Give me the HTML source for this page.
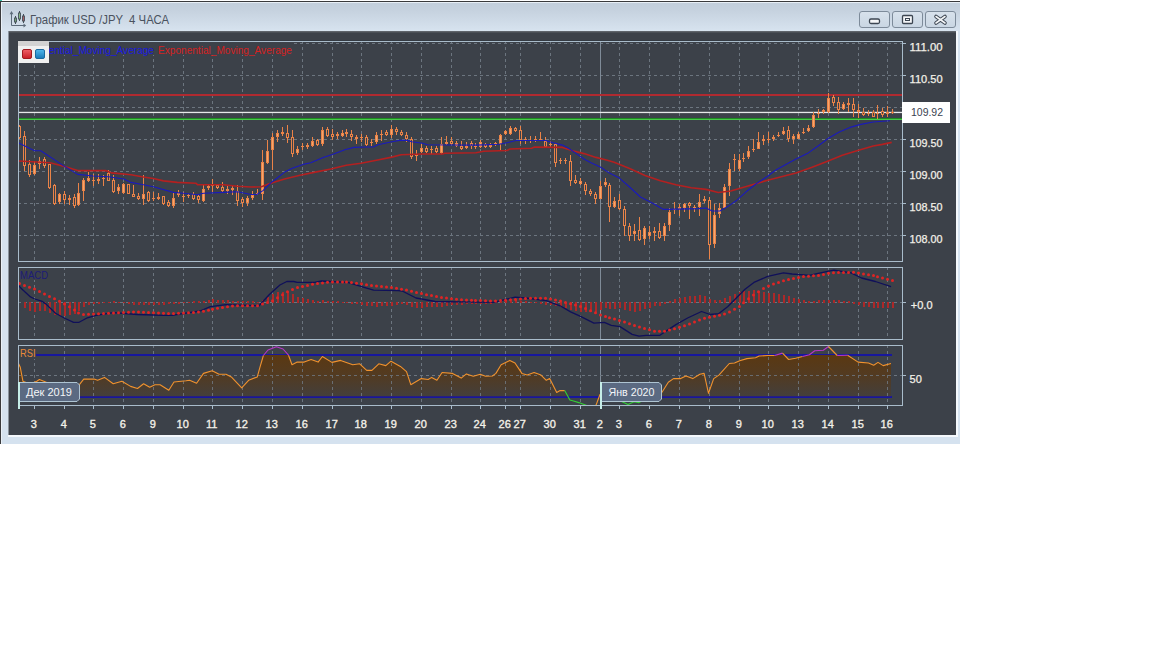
<!DOCTYPE html><html><head><meta charset="utf-8"><title>USD/JPY</title><style>html,body{margin:0;padding:0;background:#fff;width:1152px;height:648px;overflow:hidden}svg{display:block}text{font-family:"Liberation Sans",sans-serif}</style></head><body>
<svg width="1152" height="648" viewBox="0 0 1152 648">
<defs>
<linearGradient id="tb" x1="0" y1="0" x2="0" y2="1"><stop offset="0" stop-color="#c2cedb"/><stop offset="0.3" stop-color="#c6d2df"/><stop offset="1" stop-color="#d7e3ef"/></linearGradient>
<linearGradient id="lr" x1="0" y1="0" x2="0" y2="1"><stop offset="0" stop-color="#f06068"/><stop offset="1" stop-color="#c81c24"/></linearGradient><linearGradient id="lb" x1="0" y1="0" x2="0" y2="1"><stop offset="0" stop-color="#50b8ec"/><stop offset="1" stop-color="#1878b8"/></linearGradient>
<linearGradient id="btn" x1="0" y1="0" x2="0" y2="1"><stop offset="0" stop-color="#d8e2ec"/><stop offset="1" stop-color="#c9d6e3"/></linearGradient>
<linearGradient id="rf" gradientUnits="userSpaceOnUse" x1="0" y1="355" x2="0" y2="397"><stop offset="0" stop-color="#5c3810" stop-opacity="0.97"/><stop offset="0.5" stop-color="#5c3810" stop-opacity="0.68"/><stop offset="1" stop-color="#5c3810" stop-opacity="0.22"/></linearGradient>
<clipPath id="cmain"><rect x="19" y="42" width="883" height="219"/></clipPath>
<clipPath id="cmacd"><rect x="19" y="268" width="883" height="71"/></clipPath>
<clipPath id="crsi"><rect x="19" y="346" width="883" height="59"/></clipPath>
<clipPath id="rmid"><rect x="0" y="355" width="960" height="42"/></clipPath>
<clipPath id="rhi"><rect x="0" y="340" width="960" height="15"/></clipPath>
<clipPath id="rlo"><rect x="0" y="397" width="960" height="9"/></clipPath>
</defs>
<rect width="1152" height="648" fill="#fff"/>
<rect x="0" y="1" width="960" height="443" fill="#d5e2ef"/>
<rect x="1" y="2" width="959" height="29" fill="url(#tb)"/>
<rect x="1" y="2" width="959" height="1" fill="#e8eff6"/>
<rect x="1" y="2" width="1" height="442" fill="#eaf1f8"/>
<rect x="0" y="1" width="960" height="1" fill="#3a3a3c"/>
<rect x="0" y="0" width="1" height="444" fill="#3a3a3c"/>
<rect x="0" y="0" width="2" height="1" fill="#3cc0b0"/>
<rect x="9" y="31" width="947" height="404" fill="#3c4149"/>
<rect x="9" y="31" width="947" height="1" fill="#5f646b"/>
<rect x="9" y="32" width="947" height="1" fill="#4a4f56"/>
<rect x="8" y="31" width="1" height="405" fill="#8a949e"/>
<rect x="956" y="31" width="2" height="406" fill="#f4f8fc"/>
<rect x="8" y="435" width="950" height="2" fill="#f4f8fc"/>
<g fill="none" stroke="#5d6b7a" stroke-width="1">
<path d="M11.5 13 V25.5 H24"/>
</g>
<path d="M9.6 14.2 L11.5 11 L13.4 14.2 Z" fill="#5d6b7a"/><path d="M23.5 23.6 L26.2 25.5 L23.5 27.4 Z" fill="#5d6b7a"/>
<g stroke="#45505a" stroke-width="1">
<path d="M15.5 16 V24"/><path d="M19.5 11 V21"/><path d="M23.5 14 V23"/>
</g>
<rect x="14.5" y="18" width="2" height="4" fill="#78a878" stroke="#45505a" stroke-width="0.9"/>
<rect x="18.5" y="13" width="2" height="6" fill="#88b888" stroke="#45505a" stroke-width="0.9"/>
<rect x="22.5" y="16" width="2" height="5" fill="#a86068" stroke="#45505a" stroke-width="0.9"/>
<text x="30" y="24" font-size="12" fill="#4a525e" textLength="139" lengthAdjust="spacingAndGlyphs" xml:space="preserve">График USD /JPY  4 ЧАСА</text>
<rect x="859.5" y="11.5" width="30" height="16" rx="2.5" fill="url(#btn)" stroke="#7d8b9a"/>
<rect x="892.5" y="11.5" width="30" height="16" rx="2.5" fill="url(#btn)" stroke="#7d8b9a"/>
<rect x="925.5" y="11.5" width="30" height="16" rx="2.5" fill="url(#btn)" stroke="#7d8b9a"/>
<rect x="869.5" y="19" width="10" height="4.5" rx="1.5" fill="#f4f6f8" stroke="#3c4652" stroke-width="1.3"/>
<rect x="902.5" y="15.5" width="10" height="8" rx="1" fill="#f4f6f8" stroke="#3c4652" stroke-width="1.3"/>
<rect x="905.5" y="18.5" width="4" height="2" fill="none" stroke="#3c4652" stroke-width="1"/>
<path d="M936 16.5 L945 23 M945 16.5 L936 23" stroke="#3c4652" stroke-width="3.6" stroke-linecap="round"/>
<path d="M936 16.5 L945 23 M945 16.5 L936 23" stroke="#f4f6f8" stroke-width="1.6" stroke-linecap="round"/>
<g stroke="#6c757f" stroke-width="1" stroke-dasharray="3 3" shape-rendering="crispEdges">
<path d="M34.5 41 V261"/>
<path d="M34.5 267 V339"/>
<path d="M34.5 345 V405"/>
<path d="M64.5 41 V261"/>
<path d="M64.5 267 V339"/>
<path d="M64.5 345 V405"/>
<path d="M93.5 41 V261"/>
<path d="M93.5 267 V339"/>
<path d="M93.5 345 V405"/>
<path d="M123.5 41 V261"/>
<path d="M123.5 267 V339"/>
<path d="M123.5 345 V405"/>
<path d="M153.5 41 V261"/>
<path d="M153.5 267 V339"/>
<path d="M153.5 345 V405"/>
<path d="M183.5 41 V261"/>
<path d="M183.5 267 V339"/>
<path d="M183.5 345 V405"/>
<path d="M212.5 41 V261"/>
<path d="M212.5 267 V339"/>
<path d="M212.5 345 V405"/>
<path d="M242.5 41 V261"/>
<path d="M242.5 267 V339"/>
<path d="M242.5 345 V405"/>
<path d="M272.5 41 V261"/>
<path d="M272.5 267 V339"/>
<path d="M272.5 345 V405"/>
<path d="M302.5 41 V261"/>
<path d="M302.5 267 V339"/>
<path d="M302.5 345 V405"/>
<path d="M332.5 41 V261"/>
<path d="M332.5 267 V339"/>
<path d="M332.5 345 V405"/>
<path d="M361.5 41 V261"/>
<path d="M361.5 267 V339"/>
<path d="M361.5 345 V405"/>
<path d="M391.5 41 V261"/>
<path d="M391.5 267 V339"/>
<path d="M391.5 345 V405"/>
<path d="M421.5 41 V261"/>
<path d="M421.5 267 V339"/>
<path d="M421.5 345 V405"/>
<path d="M451.5 41 V261"/>
<path d="M451.5 267 V339"/>
<path d="M451.5 345 V405"/>
<path d="M480.5 41 V261"/>
<path d="M480.5 267 V339"/>
<path d="M480.5 345 V405"/>
<path d="M505.5 41 V261"/>
<path d="M505.5 267 V339"/>
<path d="M505.5 345 V405"/>
<path d="M520.5 41 V261"/>
<path d="M520.5 267 V339"/>
<path d="M520.5 345 V405"/>
<path d="M550.5 41 V261"/>
<path d="M550.5 267 V339"/>
<path d="M550.5 345 V405"/>
<path d="M580.5 41 V261"/>
<path d="M580.5 267 V339"/>
<path d="M580.5 345 V405"/>
<path d="M619.5 41 V261"/>
<path d="M619.5 267 V339"/>
<path d="M619.5 345 V405"/>
<path d="M649.5 41 V261"/>
<path d="M649.5 267 V339"/>
<path d="M649.5 345 V405"/>
<path d="M679.5 41 V261"/>
<path d="M679.5 267 V339"/>
<path d="M679.5 345 V405"/>
<path d="M709.5 41 V261"/>
<path d="M709.5 267 V339"/>
<path d="M709.5 345 V405"/>
<path d="M739.5 41 V261"/>
<path d="M739.5 267 V339"/>
<path d="M739.5 345 V405"/>
<path d="M768.5 41 V261"/>
<path d="M768.5 267 V339"/>
<path d="M768.5 345 V405"/>
<path d="M798.5 41 V261"/>
<path d="M798.5 267 V339"/>
<path d="M798.5 345 V405"/>
<path d="M828.5 41 V261"/>
<path d="M828.5 267 V339"/>
<path d="M828.5 345 V405"/>
<path d="M858.5 41 V261"/>
<path d="M858.5 267 V339"/>
<path d="M858.5 345 V405"/>
<path d="M887.5 41 V261"/>
<path d="M887.5 267 V339"/>
<path d="M887.5 345 V405"/>
<path d="M18 43.5 H902"/>
<path d="M18 75.5 H902"/>
<path d="M18 107.5 H902"/>
<path d="M18 139.5 H902"/>
<path d="M18 171.5 H902"/>
<path d="M18 203.5 H902"/>
<path d="M18 235.5 H902"/>
<path d="M18 302.5 H902"/>
<path d="M18 375.5 H902"/>
</g>
<path d="M600.5 42 V261" stroke="#7f8b98" stroke-width="1" shape-rendering="crispEdges"/>
<path d="M600.5 268 V339" stroke="#7f8b98" stroke-width="1" shape-rendering="crispEdges"/>
<path d="M600.5 346 V405" stroke="#7f8b98" stroke-width="1" shape-rendering="crispEdges"/>
<rect x="19" y="94" width="883" height="2" fill="#b02a30"/>
<rect x="19" y="42" width="274" height="13" fill="#3c4149"/>
<text x="20" y="53.5" font-size="11" fill="#1a1ae0" textLength="134" lengthAdjust="spacingAndGlyphs">Exponential_Moving_Average</text>
<text x="158" y="53.5" font-size="11" fill="#d42222" textLength="134" lengthAdjust="spacingAndGlyphs">Exponential_Moving_Average</text>
<rect x="19" y="111.8" width="883" height="1.3" fill="#e6e8ea"/>
<rect x="19" y="118" width="883" height="1" fill="#1e8a22"/>
<rect x="19" y="119" width="883" height="1" fill="#48c84a"/>
<g clip-path="url(#cmain)" shape-rendering="crispEdges">
<rect x="19" y="125" width="1" height="14" fill="#ea8348"/>
<rect x="18" y="126" width="3" height="12" fill="#ea8348"/>
<rect x="19" y="127" width="1" height="10" fill="#3c4149"/>
<rect x="24" y="131" width="1" height="40" fill="#ea8348"/>
<rect x="23" y="136" width="3" height="30" fill="#ea8348"/>
<rect x="24" y="137" width="1" height="28" fill="#3c4149"/>
<rect x="29" y="160" width="1" height="17" fill="#ea8348"/>
<rect x="28" y="164" width="3" height="11" fill="#ea8348"/>
<rect x="29" y="165" width="1" height="9" fill="#3c4149"/>
<rect x="34" y="161" width="1" height="14" fill="#ea8348"/>
<rect x="33" y="165" width="3" height="9" fill="#ea8348"/>
<rect x="34" y="166" width="1" height="7" fill="#f6a66c"/>
<rect x="39" y="157" width="1" height="12" fill="#ea8348"/>
<rect x="38" y="161" width="3" height="3" fill="#ea8348"/>
<rect x="39" y="162" width="1" height="1" fill="#f6a66c"/>
<rect x="44" y="157" width="1" height="11" fill="#ea8348"/>
<rect x="43" y="159" width="3" height="7" fill="#ea8348"/>
<rect x="44" y="160" width="1" height="5" fill="#3c4149"/>
<rect x="49" y="164" width="1" height="25" fill="#ea8348"/>
<rect x="48" y="164" width="3" height="24" fill="#ea8348"/>
<rect x="49" y="165" width="1" height="22" fill="#3c4149"/>
<rect x="54" y="184" width="1" height="21" fill="#ea8348"/>
<rect x="53" y="185" width="3" height="19" fill="#ea8348"/>
<rect x="54" y="186" width="1" height="17" fill="#3c4149"/>
<rect x="59" y="193" width="1" height="11" fill="#ea8348"/>
<rect x="58" y="194" width="3" height="8" fill="#ea8348"/>
<rect x="59" y="195" width="1" height="6" fill="#f6a66c"/>
<rect x="64" y="191" width="1" height="13" fill="#ea8348"/>
<rect x="63" y="194" width="3" height="6" fill="#ea8348"/>
<rect x="64" y="195" width="1" height="4" fill="#3c4149"/>
<rect x="69" y="195" width="1" height="10" fill="#ea8348"/>
<rect x="68" y="198" width="3" height="2" fill="#ea8348"/>
<rect x="74" y="194" width="1" height="14" fill="#ea8348"/>
<rect x="73" y="197" width="3" height="9" fill="#ea8348"/>
<rect x="74" y="198" width="1" height="7" fill="#3c4149"/>
<rect x="78" y="183" width="1" height="23" fill="#ea8348"/>
<rect x="77" y="193" width="3" height="12" fill="#ea8348"/>
<rect x="78" y="194" width="1" height="10" fill="#f6a66c"/>
<rect x="83" y="178" width="1" height="23" fill="#ea8348"/>
<rect x="82" y="180" width="3" height="11" fill="#ea8348"/>
<rect x="83" y="181" width="1" height="9" fill="#f6a66c"/>
<rect x="88" y="172" width="1" height="10" fill="#ea8348"/>
<rect x="87" y="178" width="3" height="3" fill="#ea8348"/>
<rect x="88" y="179" width="1" height="1" fill="#f6a66c"/>
<rect x="93" y="174" width="1" height="12" fill="#ea8348"/>
<rect x="92" y="180" width="3" height="1" fill="#ea8348"/>
<rect x="98" y="174" width="1" height="10" fill="#ea8348"/>
<rect x="97" y="179" width="3" height="2" fill="#ea8348"/>
<rect x="103" y="175" width="1" height="11" fill="#ea8348"/>
<rect x="102" y="178" width="3" height="1" fill="#ea8348"/>
<rect x="108" y="170" width="1" height="11" fill="#ea8348"/>
<rect x="107" y="173" width="3" height="8" fill="#ea8348"/>
<rect x="108" y="174" width="1" height="6" fill="#3c4149"/>
<rect x="113" y="175" width="1" height="18" fill="#ea8348"/>
<rect x="112" y="180" width="3" height="12" fill="#ea8348"/>
<rect x="113" y="181" width="1" height="10" fill="#3c4149"/>
<rect x="118" y="184" width="1" height="10" fill="#ea8348"/>
<rect x="117" y="187" width="3" height="4" fill="#ea8348"/>
<rect x="118" y="188" width="1" height="2" fill="#f6a66c"/>
<rect x="123" y="183" width="1" height="11" fill="#ea8348"/>
<rect x="122" y="184" width="3" height="9" fill="#ea8348"/>
<rect x="123" y="185" width="1" height="7" fill="#f6a66c"/>
<rect x="128" y="184" width="1" height="10" fill="#ea8348"/>
<rect x="127" y="184" width="3" height="10" fill="#ea8348"/>
<rect x="128" y="185" width="1" height="8" fill="#3c4149"/>
<rect x="133" y="185" width="1" height="12" fill="#ea8348"/>
<rect x="132" y="194" width="3" height="3" fill="#ea8348"/>
<rect x="133" y="195" width="1" height="1" fill="#3c4149"/>
<rect x="138" y="193" width="1" height="7" fill="#ea8348"/>
<rect x="137" y="196" width="3" height="3" fill="#ea8348"/>
<rect x="138" y="197" width="1" height="1" fill="#3c4149"/>
<rect x="143" y="175" width="1" height="30" fill="#ea8348"/>
<rect x="142" y="194" width="3" height="5" fill="#ea8348"/>
<rect x="143" y="195" width="1" height="3" fill="#f6a66c"/>
<rect x="148" y="191" width="1" height="11" fill="#ea8348"/>
<rect x="147" y="192" width="3" height="9" fill="#ea8348"/>
<rect x="148" y="193" width="1" height="7" fill="#3c4149"/>
<rect x="153" y="192" width="1" height="9" fill="#ea8348"/>
<rect x="152" y="198" width="3" height="1" fill="#ea8348"/>
<rect x="158" y="193" width="1" height="7" fill="#ea8348"/>
<rect x="157" y="197" width="3" height="2" fill="#ea8348"/>
<rect x="163" y="196" width="1" height="9" fill="#ea8348"/>
<rect x="162" y="196" width="3" height="8" fill="#ea8348"/>
<rect x="163" y="197" width="1" height="6" fill="#3c4149"/>
<rect x="168" y="200" width="1" height="7" fill="#ea8348"/>
<rect x="167" y="202" width="3" height="4" fill="#ea8348"/>
<rect x="168" y="203" width="1" height="2" fill="#3c4149"/>
<rect x="173" y="193" width="1" height="15" fill="#ea8348"/>
<rect x="172" y="198" width="3" height="8" fill="#ea8348"/>
<rect x="173" y="199" width="1" height="6" fill="#f6a66c"/>
<rect x="178" y="190" width="1" height="7" fill="#ea8348"/>
<rect x="177" y="193" width="3" height="2" fill="#ea8348"/>
<rect x="183" y="192" width="1" height="10" fill="#ea8348"/>
<rect x="182" y="196" width="3" height="1" fill="#ea8348"/>
<rect x="188" y="194" width="1" height="4" fill="#ea8348"/>
<rect x="187" y="195" width="3" height="1" fill="#ea8348"/>
<rect x="193" y="192" width="1" height="8" fill="#ea8348"/>
<rect x="192" y="194" width="3" height="5" fill="#ea8348"/>
<rect x="193" y="195" width="1" height="3" fill="#3c4149"/>
<rect x="198" y="195" width="1" height="8" fill="#ea8348"/>
<rect x="197" y="196" width="3" height="4" fill="#ea8348"/>
<rect x="198" y="197" width="1" height="2" fill="#3c4149"/>
<rect x="203" y="185" width="1" height="17" fill="#ea8348"/>
<rect x="202" y="189" width="3" height="12" fill="#ea8348"/>
<rect x="203" y="190" width="1" height="10" fill="#f6a66c"/>
<rect x="208" y="185" width="1" height="5" fill="#ea8348"/>
<rect x="207" y="186" width="3" height="2" fill="#ea8348"/>
<rect x="212" y="179" width="1" height="13" fill="#ea8348"/>
<rect x="211" y="184" width="3" height="2" fill="#ea8348"/>
<rect x="217" y="185" width="1" height="4" fill="#ea8348"/>
<rect x="216" y="185" width="3" height="3" fill="#ea8348"/>
<rect x="217" y="186" width="1" height="1" fill="#3c4149"/>
<rect x="222" y="182" width="1" height="10" fill="#ea8348"/>
<rect x="221" y="187" width="3" height="4" fill="#ea8348"/>
<rect x="222" y="188" width="1" height="2" fill="#3c4149"/>
<rect x="227" y="186" width="1" height="8" fill="#ea8348"/>
<rect x="226" y="189" width="3" height="2" fill="#ea8348"/>
<rect x="232" y="186" width="1" height="9" fill="#ea8348"/>
<rect x="231" y="188" width="3" height="2" fill="#ea8348"/>
<rect x="237" y="185" width="1" height="21" fill="#ea8348"/>
<rect x="236" y="191" width="3" height="10" fill="#ea8348"/>
<rect x="237" y="192" width="1" height="8" fill="#3c4149"/>
<rect x="242" y="197" width="1" height="10" fill="#ea8348"/>
<rect x="241" y="199" width="3" height="4" fill="#ea8348"/>
<rect x="242" y="200" width="1" height="2" fill="#3c4149"/>
<rect x="247" y="196" width="1" height="10" fill="#ea8348"/>
<rect x="246" y="198" width="3" height="5" fill="#ea8348"/>
<rect x="247" y="199" width="1" height="3" fill="#f6a66c"/>
<rect x="252" y="191" width="1" height="9" fill="#ea8348"/>
<rect x="251" y="195" width="3" height="3" fill="#ea8348"/>
<rect x="252" y="196" width="1" height="1" fill="#f6a66c"/>
<rect x="257" y="189" width="1" height="6" fill="#ea8348"/>
<rect x="256" y="193" width="3" height="1" fill="#ea8348"/>
<rect x="262" y="150" width="1" height="50" fill="#ea8348"/>
<rect x="261" y="162" width="3" height="32" fill="#ea8348"/>
<rect x="262" y="163" width="1" height="30" fill="#f6a66c"/>
<rect x="267" y="140" width="1" height="24" fill="#ea8348"/>
<rect x="266" y="151" width="3" height="12" fill="#ea8348"/>
<rect x="267" y="152" width="1" height="10" fill="#f6a66c"/>
<rect x="272" y="133" width="1" height="37" fill="#ea8348"/>
<rect x="271" y="137" width="3" height="13" fill="#ea8348"/>
<rect x="272" y="138" width="1" height="11" fill="#f6a66c"/>
<rect x="277" y="130" width="1" height="12" fill="#ea8348"/>
<rect x="276" y="133" width="3" height="4" fill="#ea8348"/>
<rect x="277" y="134" width="1" height="2" fill="#f6a66c"/>
<rect x="282" y="127" width="1" height="9" fill="#ea8348"/>
<rect x="281" y="132" width="3" height="2" fill="#ea8348"/>
<rect x="287" y="125" width="1" height="18" fill="#ea8348"/>
<rect x="286" y="133" width="3" height="5" fill="#ea8348"/>
<rect x="287" y="134" width="1" height="3" fill="#3c4149"/>
<rect x="292" y="130" width="1" height="27" fill="#ea8348"/>
<rect x="291" y="137" width="3" height="17" fill="#ea8348"/>
<rect x="292" y="138" width="1" height="15" fill="#3c4149"/>
<rect x="297" y="146" width="1" height="9" fill="#ea8348"/>
<rect x="296" y="149" width="3" height="4" fill="#ea8348"/>
<rect x="297" y="150" width="1" height="2" fill="#f6a66c"/>
<rect x="302" y="143" width="1" height="7" fill="#ea8348"/>
<rect x="301" y="146" width="3" height="1" fill="#ea8348"/>
<rect x="307" y="143" width="1" height="6" fill="#ea8348"/>
<rect x="306" y="145" width="3" height="2" fill="#ea8348"/>
<rect x="312" y="137" width="1" height="10" fill="#ea8348"/>
<rect x="311" y="141" width="3" height="5" fill="#ea8348"/>
<rect x="312" y="142" width="1" height="3" fill="#f6a66c"/>
<rect x="317" y="139" width="1" height="7" fill="#ea8348"/>
<rect x="316" y="140" width="3" height="5" fill="#ea8348"/>
<rect x="317" y="141" width="1" height="3" fill="#3c4149"/>
<rect x="322" y="127" width="1" height="19" fill="#ea8348"/>
<rect x="321" y="130" width="3" height="14" fill="#ea8348"/>
<rect x="322" y="131" width="1" height="12" fill="#f6a66c"/>
<rect x="327" y="127" width="1" height="10" fill="#ea8348"/>
<rect x="326" y="129" width="3" height="7" fill="#ea8348"/>
<rect x="327" y="130" width="1" height="5" fill="#3c4149"/>
<rect x="332" y="129" width="1" height="11" fill="#ea8348"/>
<rect x="331" y="134" width="3" height="3" fill="#ea8348"/>
<rect x="332" y="135" width="1" height="1" fill="#3c4149"/>
<rect x="337" y="132" width="1" height="7" fill="#ea8348"/>
<rect x="336" y="134" width="3" height="2" fill="#ea8348"/>
<rect x="342" y="130" width="1" height="7" fill="#ea8348"/>
<rect x="341" y="133" width="3" height="3" fill="#ea8348"/>
<rect x="342" y="134" width="1" height="1" fill="#f6a66c"/>
<rect x="346" y="129" width="1" height="8" fill="#ea8348"/>
<rect x="345" y="132" width="3" height="2" fill="#ea8348"/>
<rect x="351" y="130" width="1" height="11" fill="#ea8348"/>
<rect x="350" y="134" width="3" height="3" fill="#ea8348"/>
<rect x="351" y="135" width="1" height="1" fill="#3c4149"/>
<rect x="356" y="135" width="1" height="9" fill="#ea8348"/>
<rect x="355" y="137" width="3" height="2" fill="#ea8348"/>
<rect x="361" y="134" width="1" height="8" fill="#ea8348"/>
<rect x="360" y="137" width="3" height="1" fill="#ea8348"/>
<rect x="366" y="135" width="1" height="11" fill="#ea8348"/>
<rect x="365" y="137" width="3" height="8" fill="#ea8348"/>
<rect x="366" y="138" width="1" height="6" fill="#3c4149"/>
<rect x="371" y="139" width="1" height="7" fill="#ea8348"/>
<rect x="370" y="142" width="3" height="1" fill="#ea8348"/>
<rect x="376" y="132" width="1" height="12" fill="#ea8348"/>
<rect x="375" y="135" width="3" height="7" fill="#ea8348"/>
<rect x="376" y="136" width="1" height="5" fill="#f6a66c"/>
<rect x="381" y="130" width="1" height="11" fill="#ea8348"/>
<rect x="380" y="134" width="3" height="1" fill="#ea8348"/>
<rect x="386" y="130" width="1" height="6" fill="#ea8348"/>
<rect x="385" y="132" width="3" height="3" fill="#ea8348"/>
<rect x="386" y="133" width="1" height="1" fill="#3c4149"/>
<rect x="391" y="125" width="1" height="13" fill="#ea8348"/>
<rect x="390" y="129" width="3" height="6" fill="#ea8348"/>
<rect x="391" y="130" width="1" height="4" fill="#f6a66c"/>
<rect x="396" y="127" width="1" height="8" fill="#ea8348"/>
<rect x="395" y="129" width="3" height="3" fill="#ea8348"/>
<rect x="396" y="130" width="1" height="1" fill="#3c4149"/>
<rect x="401" y="130" width="1" height="6" fill="#ea8348"/>
<rect x="400" y="132" width="3" height="3" fill="#ea8348"/>
<rect x="401" y="133" width="1" height="1" fill="#3c4149"/>
<rect x="406" y="132" width="1" height="10" fill="#ea8348"/>
<rect x="405" y="135" width="3" height="4" fill="#ea8348"/>
<rect x="406" y="136" width="1" height="2" fill="#3c4149"/>
<rect x="411" y="137" width="1" height="22" fill="#ea8348"/>
<rect x="410" y="139" width="3" height="18" fill="#ea8348"/>
<rect x="411" y="140" width="1" height="16" fill="#3c4149"/>
<rect x="416" y="150" width="1" height="11" fill="#ea8348"/>
<rect x="415" y="154" width="3" height="2" fill="#ea8348"/>
<rect x="421" y="144" width="1" height="9" fill="#ea8348"/>
<rect x="420" y="148" width="3" height="4" fill="#ea8348"/>
<rect x="421" y="149" width="1" height="2" fill="#f6a66c"/>
<rect x="426" y="146" width="1" height="7" fill="#ea8348"/>
<rect x="425" y="148" width="3" height="4" fill="#ea8348"/>
<rect x="426" y="149" width="1" height="2" fill="#3c4149"/>
<rect x="431" y="146" width="1" height="8" fill="#ea8348"/>
<rect x="430" y="149" width="3" height="1" fill="#ea8348"/>
<rect x="436" y="146" width="1" height="7" fill="#ea8348"/>
<rect x="435" y="148" width="3" height="4" fill="#ea8348"/>
<rect x="436" y="149" width="1" height="2" fill="#3c4149"/>
<rect x="441" y="137" width="1" height="17" fill="#ea8348"/>
<rect x="440" y="144" width="3" height="9" fill="#ea8348"/>
<rect x="441" y="145" width="1" height="7" fill="#f6a66c"/>
<rect x="446" y="136" width="1" height="9" fill="#ea8348"/>
<rect x="445" y="142" width="3" height="2" fill="#ea8348"/>
<rect x="451" y="137" width="1" height="8" fill="#ea8348"/>
<rect x="450" y="141" width="3" height="3" fill="#ea8348"/>
<rect x="451" y="142" width="1" height="1" fill="#3c4149"/>
<rect x="456" y="141" width="1" height="6" fill="#ea8348"/>
<rect x="455" y="143" width="3" height="3" fill="#ea8348"/>
<rect x="456" y="144" width="1" height="1" fill="#f6a66c"/>
<rect x="461" y="141" width="1" height="9" fill="#ea8348"/>
<rect x="460" y="146" width="3" height="3" fill="#ea8348"/>
<rect x="461" y="147" width="1" height="1" fill="#3c4149"/>
<rect x="466" y="142" width="1" height="7" fill="#ea8348"/>
<rect x="465" y="146" width="3" height="2" fill="#ea8348"/>
<rect x="471" y="141" width="1" height="8" fill="#ea8348"/>
<rect x="470" y="143" width="3" height="3" fill="#ea8348"/>
<rect x="471" y="144" width="1" height="1" fill="#3c4149"/>
<rect x="475" y="143" width="1" height="6" fill="#ea8348"/>
<rect x="474" y="146" width="3" height="1" fill="#ea8348"/>
<rect x="480" y="140" width="1" height="8" fill="#ea8348"/>
<rect x="479" y="142" width="3" height="5" fill="#ea8348"/>
<rect x="480" y="143" width="1" height="3" fill="#f6a66c"/>
<rect x="485" y="143" width="1" height="5" fill="#ea8348"/>
<rect x="484" y="144" width="3" height="3" fill="#ea8348"/>
<rect x="485" y="145" width="1" height="1" fill="#3c4149"/>
<rect x="490" y="143" width="1" height="5" fill="#ea8348"/>
<rect x="489" y="145" width="3" height="2" fill="#ea8348"/>
<rect x="495" y="142" width="1" height="4" fill="#ea8348"/>
<rect x="494" y="143" width="3" height="2" fill="#ea8348"/>
<rect x="500" y="134" width="1" height="16" fill="#ea8348"/>
<rect x="499" y="135" width="3" height="9" fill="#ea8348"/>
<rect x="500" y="136" width="1" height="7" fill="#f6a66c"/>
<rect x="505" y="130" width="1" height="5" fill="#ea8348"/>
<rect x="504" y="131" width="3" height="3" fill="#ea8348"/>
<rect x="505" y="132" width="1" height="1" fill="#f6a66c"/>
<rect x="510" y="126" width="1" height="9" fill="#ea8348"/>
<rect x="509" y="128" width="3" height="6" fill="#ea8348"/>
<rect x="510" y="129" width="1" height="4" fill="#f6a66c"/>
<rect x="515" y="127" width="1" height="5" fill="#ea8348"/>
<rect x="514" y="128" width="3" height="3" fill="#ea8348"/>
<rect x="515" y="129" width="1" height="1" fill="#3c4149"/>
<rect x="520" y="126" width="1" height="18" fill="#ea8348"/>
<rect x="519" y="130" width="3" height="10" fill="#ea8348"/>
<rect x="520" y="131" width="1" height="8" fill="#3c4149"/>
<rect x="525" y="137" width="1" height="7" fill="#ea8348"/>
<rect x="524" y="139" width="3" height="1" fill="#ea8348"/>
<rect x="530" y="136" width="1" height="7" fill="#ea8348"/>
<rect x="529" y="140" width="3" height="1" fill="#ea8348"/>
<rect x="535" y="136" width="1" height="6" fill="#ea8348"/>
<rect x="534" y="139" width="3" height="1" fill="#ea8348"/>
<rect x="540" y="132" width="1" height="9" fill="#ea8348"/>
<rect x="539" y="139" width="3" height="1" fill="#ea8348"/>
<rect x="545" y="137" width="1" height="10" fill="#ea8348"/>
<rect x="544" y="141" width="3" height="6" fill="#ea8348"/>
<rect x="545" y="142" width="1" height="4" fill="#3c4149"/>
<rect x="550" y="141" width="1" height="6" fill="#ea8348"/>
<rect x="549" y="144" width="3" height="1" fill="#ea8348"/>
<rect x="555" y="143" width="1" height="24" fill="#ea8348"/>
<rect x="554" y="144" width="3" height="19" fill="#ea8348"/>
<rect x="555" y="145" width="1" height="17" fill="#3c4149"/>
<rect x="560" y="158" width="1" height="6" fill="#ea8348"/>
<rect x="559" y="160" width="3" height="1" fill="#ea8348"/>
<rect x="565" y="158" width="1" height="6" fill="#ea8348"/>
<rect x="564" y="160" width="3" height="1" fill="#ea8348"/>
<rect x="570" y="155" width="1" height="31" fill="#ea8348"/>
<rect x="569" y="161" width="3" height="20" fill="#ea8348"/>
<rect x="570" y="162" width="1" height="18" fill="#3c4149"/>
<rect x="575" y="175" width="1" height="9" fill="#ea8348"/>
<rect x="574" y="180" width="3" height="3" fill="#ea8348"/>
<rect x="575" y="181" width="1" height="1" fill="#3c4149"/>
<rect x="580" y="178" width="1" height="7" fill="#ea8348"/>
<rect x="579" y="181" width="3" height="3" fill="#ea8348"/>
<rect x="580" y="182" width="1" height="1" fill="#f6a66c"/>
<rect x="585" y="182" width="1" height="13" fill="#ea8348"/>
<rect x="584" y="184" width="3" height="7" fill="#ea8348"/>
<rect x="585" y="185" width="1" height="5" fill="#3c4149"/>
<rect x="590" y="189" width="1" height="7" fill="#ea8348"/>
<rect x="589" y="191" width="3" height="3" fill="#ea8348"/>
<rect x="590" y="192" width="1" height="1" fill="#3c4149"/>
<rect x="595" y="192" width="1" height="12" fill="#ea8348"/>
<rect x="594" y="194" width="3" height="5" fill="#ea8348"/>
<rect x="595" y="195" width="1" height="3" fill="#3c4149"/>
<rect x="600" y="181" width="1" height="18" fill="#ea8348"/>
<rect x="599" y="186" width="3" height="13" fill="#ea8348"/>
<rect x="600" y="187" width="1" height="11" fill="#f6a66c"/>
<rect x="605" y="178" width="1" height="9" fill="#ea8348"/>
<rect x="604" y="182" width="3" height="3" fill="#ea8348"/>
<rect x="605" y="183" width="1" height="1" fill="#f6a66c"/>
<rect x="609" y="183" width="1" height="39" fill="#ea8348"/>
<rect x="608" y="185" width="3" height="22" fill="#ea8348"/>
<rect x="609" y="186" width="1" height="20" fill="#3c4149"/>
<rect x="614" y="197" width="1" height="11" fill="#ea8348"/>
<rect x="613" y="201" width="3" height="6" fill="#ea8348"/>
<rect x="614" y="202" width="1" height="4" fill="#f6a66c"/>
<rect x="619" y="194" width="1" height="16" fill="#ea8348"/>
<rect x="618" y="200" width="3" height="9" fill="#ea8348"/>
<rect x="619" y="201" width="1" height="7" fill="#3c4149"/>
<rect x="624" y="206" width="1" height="30" fill="#ea8348"/>
<rect x="623" y="209" width="3" height="17" fill="#ea8348"/>
<rect x="624" y="210" width="1" height="15" fill="#3c4149"/>
<rect x="629" y="223" width="1" height="18" fill="#ea8348"/>
<rect x="628" y="226" width="3" height="10" fill="#ea8348"/>
<rect x="629" y="227" width="1" height="8" fill="#3c4149"/>
<rect x="634" y="224" width="1" height="17" fill="#ea8348"/>
<rect x="633" y="231" width="3" height="3" fill="#ea8348"/>
<rect x="634" y="232" width="1" height="1" fill="#f6a66c"/>
<rect x="639" y="217" width="1" height="24" fill="#ea8348"/>
<rect x="638" y="230" width="3" height="10" fill="#ea8348"/>
<rect x="639" y="231" width="1" height="8" fill="#3c4149"/>
<rect x="644" y="226" width="1" height="19" fill="#ea8348"/>
<rect x="643" y="228" width="3" height="11" fill="#ea8348"/>
<rect x="644" y="229" width="1" height="9" fill="#f6a66c"/>
<rect x="649" y="226" width="1" height="13" fill="#ea8348"/>
<rect x="648" y="232" width="3" height="4" fill="#ea8348"/>
<rect x="649" y="233" width="1" height="2" fill="#f6a66c"/>
<rect x="654" y="227" width="1" height="14" fill="#ea8348"/>
<rect x="653" y="231" width="3" height="2" fill="#ea8348"/>
<rect x="659" y="223" width="1" height="16" fill="#ea8348"/>
<rect x="658" y="231" width="3" height="7" fill="#ea8348"/>
<rect x="659" y="232" width="1" height="5" fill="#3c4149"/>
<rect x="664" y="223" width="1" height="18" fill="#ea8348"/>
<rect x="663" y="226" width="3" height="10" fill="#ea8348"/>
<rect x="664" y="227" width="1" height="8" fill="#f6a66c"/>
<rect x="669" y="208" width="1" height="23" fill="#ea8348"/>
<rect x="668" y="212" width="3" height="13" fill="#ea8348"/>
<rect x="669" y="213" width="1" height="11" fill="#f6a66c"/>
<rect x="674" y="202" width="1" height="12" fill="#ea8348"/>
<rect x="673" y="209" width="3" height="1" fill="#ea8348"/>
<rect x="679" y="204" width="1" height="12" fill="#ea8348"/>
<rect x="678" y="207" width="3" height="2" fill="#ea8348"/>
<rect x="684" y="203" width="1" height="9" fill="#ea8348"/>
<rect x="683" y="204" width="3" height="4" fill="#ea8348"/>
<rect x="684" y="205" width="1" height="2" fill="#f6a66c"/>
<rect x="689" y="202" width="1" height="17" fill="#ea8348"/>
<rect x="688" y="203" width="3" height="3" fill="#ea8348"/>
<rect x="689" y="204" width="1" height="1" fill="#3c4149"/>
<rect x="694" y="205" width="1" height="7" fill="#ea8348"/>
<rect x="693" y="207" width="3" height="1" fill="#ea8348"/>
<rect x="699" y="194" width="1" height="22" fill="#ea8348"/>
<rect x="698" y="202" width="3" height="5" fill="#ea8348"/>
<rect x="699" y="203" width="1" height="3" fill="#f6a66c"/>
<rect x="704" y="196" width="1" height="7" fill="#ea8348"/>
<rect x="703" y="199" width="3" height="2" fill="#ea8348"/>
<rect x="709" y="197" width="1" height="62" fill="#ea8348"/>
<rect x="708" y="200" width="3" height="45" fill="#ea8348"/>
<rect x="709" y="201" width="1" height="43" fill="#3c4149"/>
<rect x="714" y="204" width="1" height="44" fill="#ea8348"/>
<rect x="713" y="215" width="3" height="29" fill="#ea8348"/>
<rect x="714" y="216" width="1" height="27" fill="#f6a66c"/>
<rect x="719" y="203" width="1" height="15" fill="#ea8348"/>
<rect x="718" y="208" width="3" height="6" fill="#ea8348"/>
<rect x="719" y="209" width="1" height="4" fill="#f6a66c"/>
<rect x="724" y="184" width="1" height="24" fill="#ea8348"/>
<rect x="723" y="187" width="3" height="21" fill="#ea8348"/>
<rect x="724" y="188" width="1" height="19" fill="#f6a66c"/>
<rect x="729" y="163" width="1" height="33" fill="#ea8348"/>
<rect x="728" y="169" width="3" height="17" fill="#ea8348"/>
<rect x="729" y="170" width="1" height="15" fill="#f6a66c"/>
<rect x="734" y="154" width="1" height="17" fill="#ea8348"/>
<rect x="733" y="159" width="3" height="1" fill="#ea8348"/>
<rect x="739" y="154" width="1" height="17" fill="#ea8348"/>
<rect x="738" y="160" width="3" height="9" fill="#ea8348"/>
<rect x="739" y="161" width="1" height="7" fill="#f6a66c"/>
<rect x="743" y="153" width="1" height="9" fill="#ea8348"/>
<rect x="742" y="158" width="3" height="1" fill="#ea8348"/>
<rect x="748" y="146" width="1" height="13" fill="#ea8348"/>
<rect x="747" y="151" width="3" height="6" fill="#ea8348"/>
<rect x="748" y="152" width="1" height="4" fill="#f6a66c"/>
<rect x="753" y="139" width="1" height="13" fill="#ea8348"/>
<rect x="752" y="149" width="3" height="1" fill="#ea8348"/>
<rect x="758" y="132" width="1" height="17" fill="#ea8348"/>
<rect x="757" y="142" width="3" height="7" fill="#ea8348"/>
<rect x="758" y="143" width="1" height="5" fill="#f6a66c"/>
<rect x="763" y="135" width="1" height="10" fill="#ea8348"/>
<rect x="762" y="139" width="3" height="2" fill="#ea8348"/>
<rect x="768" y="132" width="1" height="11" fill="#ea8348"/>
<rect x="767" y="139" width="3" height="1" fill="#ea8348"/>
<rect x="773" y="135" width="1" height="6" fill="#ea8348"/>
<rect x="772" y="137" width="3" height="2" fill="#ea8348"/>
<rect x="778" y="132" width="1" height="5" fill="#ea8348"/>
<rect x="777" y="135" width="3" height="1" fill="#ea8348"/>
<rect x="783" y="127" width="1" height="8" fill="#ea8348"/>
<rect x="782" y="131" width="3" height="3" fill="#ea8348"/>
<rect x="783" y="132" width="1" height="1" fill="#f6a66c"/>
<rect x="788" y="126" width="1" height="16" fill="#ea8348"/>
<rect x="787" y="130" width="3" height="9" fill="#ea8348"/>
<rect x="788" y="131" width="1" height="7" fill="#3c4149"/>
<rect x="793" y="134" width="1" height="10" fill="#ea8348"/>
<rect x="792" y="136" width="3" height="3" fill="#ea8348"/>
<rect x="793" y="137" width="1" height="1" fill="#f6a66c"/>
<rect x="798" y="132" width="1" height="7" fill="#ea8348"/>
<rect x="797" y="134" width="3" height="5" fill="#ea8348"/>
<rect x="798" y="135" width="1" height="3" fill="#f6a66c"/>
<rect x="803" y="128" width="1" height="6" fill="#ea8348"/>
<rect x="802" y="132" width="3" height="1" fill="#ea8348"/>
<rect x="808" y="125" width="1" height="7" fill="#ea8348"/>
<rect x="807" y="128" width="3" height="3" fill="#ea8348"/>
<rect x="808" y="129" width="1" height="1" fill="#f6a66c"/>
<rect x="813" y="112" width="1" height="16" fill="#ea8348"/>
<rect x="812" y="115" width="3" height="12" fill="#ea8348"/>
<rect x="813" y="116" width="1" height="10" fill="#f6a66c"/>
<rect x="818" y="109" width="1" height="9" fill="#ea8348"/>
<rect x="817" y="113" width="3" height="1" fill="#ea8348"/>
<rect x="823" y="109" width="1" height="5" fill="#ea8348"/>
<rect x="822" y="110" width="3" height="2" fill="#ea8348"/>
<rect x="828" y="93" width="1" height="20" fill="#ea8348"/>
<rect x="827" y="98" width="3" height="14" fill="#ea8348"/>
<rect x="828" y="99" width="1" height="12" fill="#f6a66c"/>
<rect x="833" y="95" width="1" height="11" fill="#ea8348"/>
<rect x="832" y="97" width="3" height="6" fill="#ea8348"/>
<rect x="833" y="98" width="1" height="4" fill="#3c4149"/>
<rect x="838" y="97" width="1" height="17" fill="#ea8348"/>
<rect x="837" y="102" width="3" height="8" fill="#ea8348"/>
<rect x="838" y="103" width="1" height="6" fill="#3c4149"/>
<rect x="843" y="102" width="1" height="8" fill="#ea8348"/>
<rect x="842" y="104" width="3" height="5" fill="#ea8348"/>
<rect x="843" y="105" width="1" height="3" fill="#f6a66c"/>
<rect x="848" y="98" width="1" height="14" fill="#ea8348"/>
<rect x="847" y="103" width="3" height="2" fill="#ea8348"/>
<rect x="853" y="98" width="1" height="19" fill="#ea8348"/>
<rect x="852" y="104" width="3" height="6" fill="#ea8348"/>
<rect x="853" y="105" width="1" height="4" fill="#3c4149"/>
<rect x="858" y="104" width="1" height="14" fill="#ea8348"/>
<rect x="857" y="110" width="3" height="2" fill="#ea8348"/>
<rect x="863" y="108" width="1" height="8" fill="#ea8348"/>
<rect x="862" y="112" width="3" height="3" fill="#ea8348"/>
<rect x="863" y="113" width="1" height="1" fill="#3c4149"/>
<rect x="868" y="110" width="1" height="6" fill="#ea8348"/>
<rect x="867" y="113" width="3" height="1" fill="#ea8348"/>
<rect x="873" y="110" width="1" height="7" fill="#ea8348"/>
<rect x="872" y="112" width="3" height="5" fill="#ea8348"/>
<rect x="873" y="113" width="1" height="3" fill="#3c4149"/>
<rect x="877" y="105" width="1" height="14" fill="#ea8348"/>
<rect x="876" y="113" width="3" height="1" fill="#ea8348"/>
<rect x="882" y="108" width="1" height="9" fill="#ea8348"/>
<rect x="881" y="111" width="3" height="4" fill="#ea8348"/>
<rect x="882" y="112" width="1" height="2" fill="#3c4149"/>
<rect x="887" y="106" width="1" height="11" fill="#ea8348"/>
<rect x="886" y="112" width="3" height="2" fill="#ea8348"/>
<rect x="892" y="109" width="1" height="5" fill="#ea8348"/>
<rect x="891" y="112" width="3" height="1" fill="#ea8348"/>
</g>
<g clip-path="url(#cmain)" fill="none" stroke-linejoin="round">
<polyline points="18.3,161.0 50.0,162.8 65.4,166.7 77.7,170.6 105.5,170.6 111.7,172.9 131.0,174.7 143.3,177.0 153.4,178.5 163.4,180.9 177.3,182.4 195.8,183.2 197.4,184.7 223.6,184.7 237.5,186.3 251.0,187.0 261.4,186.8 269.1,183.7 284.6,179.0 300.0,175.2 315.4,172.1 330.9,169.0 346.3,165.2 361.0,163.3 376.4,160.2 391.9,157.1 401.1,154.8 422.7,154.0 442.8,154.0 444.3,153.2 476.0,152.8 483.7,151.3 506.9,150.5 510.0,149.0 531.6,148.2 534.6,147.1 562.4,147.4 571.7,150.5 584.0,153.6 596.0,157.4 606.4,160.0 614.1,162.3 629.6,168.5 645.0,175.4 660.4,180.8 675.9,184.7 691.3,187.8 706.0,189.4 718.3,192.5 730.7,191.0 744.6,187.1 767.7,180.2 783.2,176.3 796.0,173.0 811.4,167.6 826.9,161.4 842.3,155.2 857.7,150.6 873.2,146.0 882.4,144.4 891.7,142.4" stroke="#b42020" stroke-width="1.6"/>
<polyline points="18.3,142.8 34.5,150.8 40.7,150.8 63.8,165.9 77.7,174.4 93.2,176.0 108.6,176.7 124.0,179.0 131.0,182.4 143.3,184.7 153.4,186.7 173.4,192.4 183.5,193.2 197.4,194.8 203.5,193.2 223.6,192.4 237.5,191.7 251.0,194.5 256.8,194.5 263.0,190.6 270.7,182.9 276.9,178.3 284.6,172.1 292.3,168.2 303.1,164.4 310.8,162.8 323.2,157.4 332.4,154.4 344.8,149.7 354.0,147.4 366.0,147.0 373.3,147.0 378.0,144.8 391.9,141.7 399.6,140.4 407.3,140.4 411.9,141.7 422.7,143.2 427.4,144.8 476.0,145.1 499.1,144.3 506.9,142.8 516.1,140.5 545.4,140.5 553.2,142.8 562.4,145.1 568.6,148.2 576.3,153.6 584.0,159.0 591.0,162.8 600.3,167.0 609.5,173.1 618.8,177.7 629.6,187.0 640.4,197.0 652.7,203.2 663.5,209.4 699.0,208.6 706.0,208.0 712.2,211.0 719.9,211.0 729.1,205.6 736.9,200.2 746.1,191.8 756.9,183.3 767.7,176.3 775.4,170.2 790.9,161.7 796.0,159.1 808.3,152.9 819.1,145.2 828.4,138.2 839.2,132.1 850.0,127.4 860.8,124.4 873.2,122.0 882.4,121.3 890.0,120.8" stroke="#1a1abc" stroke-width="1.1"/>
</g>
<g clip-path="url(#cmacd)">
<g fill="#ad2828" shape-rendering="crispEdges">
<rect x="24" y="302" width="2" height="6.3"/>
<rect x="29" y="302" width="2" height="8.8"/>
<rect x="34" y="302" width="2" height="9.8"/>
<rect x="39" y="302" width="2" height="9.0"/>
<rect x="44" y="302" width="2" height="9.1"/>
<rect x="49" y="302" width="2" height="10.9"/>
<rect x="54" y="302" width="2" height="13.1"/>
<rect x="59" y="302" width="2" height="13.7"/>
<rect x="64" y="302" width="2" height="13.8"/>
<rect x="69" y="302" width="2" height="13.3"/>
<rect x="74" y="302" width="2" height="12.3"/>
<rect x="78" y="302" width="2" height="9.4"/>
<rect x="83" y="302" width="2" height="5.4"/>
<rect x="88" y="302" width="2" height="3.4"/>
<rect x="93" y="302" width="2" height="2.3"/>
<rect x="98" y="302" width="2" height="1.5"/>
<rect x="103" y="302" width="2" height="1.1"/>
<rect x="108" y="302" width="2" height="1.1"/>
<rect x="113" y="301.4" width="2" height="1.1"/>
<rect x="118" y="302" width="2" height="1.1"/>
<rect x="123" y="302" width="2" height="1.4"/>
<rect x="128" y="302" width="2" height="2.0"/>
<rect x="133" y="302" width="2" height="2.7"/>
<rect x="138" y="302" width="2" height="2.8"/>
<rect x="143" y="302" width="2" height="2.7"/>
<rect x="148" y="302" width="2" height="2.7"/>
<rect x="153" y="302" width="2" height="2.6"/>
<rect x="158" y="302" width="2" height="2.6"/>
<rect x="163" y="302" width="2" height="2.5"/>
<rect x="168" y="302" width="2" height="2.3"/>
<rect x="173" y="302" width="2" height="2.0"/>
<rect x="178" y="302" width="2" height="1.5"/>
<rect x="183" y="302" width="2" height="1.1"/>
<rect x="188" y="302" width="2" height="1.1"/>
<rect x="193" y="301.4" width="2" height="1.1"/>
<rect x="198" y="301.3" width="2" height="1.2"/>
<rect x="203" y="300.5" width="2" height="2.0"/>
<rect x="208" y="299.5" width="2" height="3.0"/>
<rect x="212" y="299.2" width="2" height="3.3"/>
<rect x="217" y="299.5" width="2" height="3.0"/>
<rect x="222" y="299.6" width="2" height="2.9"/>
<rect x="227" y="299.9" width="2" height="2.6"/>
<rect x="232" y="300.8" width="2" height="1.7"/>
<rect x="237" y="301.3" width="2" height="1.2"/>
<rect x="242" y="301.4" width="2" height="1.1"/>
<rect x="247" y="301.4" width="2" height="1.1"/>
<rect x="252" y="301.4" width="2" height="1.1"/>
<rect x="257" y="302" width="2" height="1.1"/>
<rect x="262" y="300.1" width="2" height="2.4"/>
<rect x="267" y="296.5" width="2" height="6.0"/>
<rect x="272" y="293.5" width="2" height="9.0"/>
<rect x="277" y="292.0" width="2" height="10.5"/>
<rect x="282" y="291.6" width="2" height="10.9"/>
<rect x="287" y="292.3" width="2" height="10.2"/>
<rect x="292" y="294.3" width="2" height="8.2"/>
<rect x="297" y="297.1" width="2" height="5.4"/>
<rect x="302" y="298.1" width="2" height="4.4"/>
<rect x="307" y="299.2" width="2" height="3.3"/>
<rect x="312" y="300.2" width="2" height="2.3"/>
<rect x="317" y="300.5" width="2" height="2.0"/>
<rect x="322" y="300.3" width="2" height="2.2"/>
<rect x="327" y="301.1" width="2" height="1.4"/>
<rect x="332" y="301.4" width="2" height="1.1"/>
<rect x="337" y="301.4" width="2" height="1.1"/>
<rect x="342" y="302" width="2" height="1.1"/>
<rect x="346" y="302" width="2" height="1.1"/>
<rect x="351" y="302" width="2" height="1.6"/>
<rect x="356" y="302" width="2" height="2.3"/>
<rect x="361" y="302" width="2" height="3.1"/>
<rect x="366" y="302" width="2" height="3.8"/>
<rect x="371" y="302" width="2" height="4.4"/>
<rect x="376" y="302" width="2" height="4.5"/>
<rect x="381" y="302" width="2" height="4.2"/>
<rect x="386" y="302" width="2" height="3.9"/>
<rect x="391" y="302" width="2" height="3.5"/>
<rect x="396" y="302" width="2" height="2.7"/>
<rect x="401" y="302" width="2" height="2.2"/>
<rect x="406" y="302" width="2" height="3.4"/>
<rect x="411" y="302" width="2" height="4.7"/>
<rect x="416" y="302" width="2" height="5.9"/>
<rect x="421" y="302" width="2" height="5.6"/>
<rect x="426" y="302" width="2" height="5.3"/>
<rect x="431" y="302" width="2" height="5.4"/>
<rect x="436" y="302" width="2" height="5.2"/>
<rect x="441" y="302" width="2" height="4.5"/>
<rect x="446" y="302" width="2" height="3.9"/>
<rect x="451" y="302" width="2" height="3.4"/>
<rect x="456" y="302" width="2" height="2.9"/>
<rect x="461" y="302" width="2" height="2.5"/>
<rect x="466" y="302" width="2" height="2.3"/>
<rect x="471" y="302" width="2" height="2.2"/>
<rect x="475" y="302" width="2" height="2.1"/>
<rect x="480" y="302" width="2" height="2.0"/>
<rect x="485" y="302" width="2" height="1.8"/>
<rect x="490" y="302" width="2" height="1.7"/>
<rect x="495" y="302" width="2" height="1.4"/>
<rect x="500" y="302" width="2" height="1.1"/>
<rect x="505" y="301.3" width="2" height="1.2"/>
<rect x="510" y="300.5" width="2" height="2.0"/>
<rect x="515" y="299.9" width="2" height="2.6"/>
<rect x="520" y="300.7" width="2" height="1.8"/>
<rect x="525" y="301.4" width="2" height="1.1"/>
<rect x="530" y="302" width="2" height="1.1"/>
<rect x="535" y="302" width="2" height="1.4"/>
<rect x="540" y="302" width="2" height="2.0"/>
<rect x="545" y="302" width="2" height="2.6"/>
<rect x="550" y="302" width="2" height="3.3"/>
<rect x="555" y="302" width="2" height="4.1"/>
<rect x="560" y="302" width="2" height="5.0"/>
<rect x="565" y="302" width="2" height="6.4"/>
<rect x="570" y="302" width="2" height="7.8"/>
<rect x="575" y="302" width="2" height="8.8"/>
<rect x="580" y="302" width="2" height="9.8"/>
<rect x="585" y="302" width="2" height="10.2"/>
<rect x="590" y="302" width="2" height="10.4"/>
<rect x="595" y="302" width="2" height="10.3"/>
<rect x="600" y="302" width="2" height="7.9"/>
<rect x="605" y="302" width="2" height="6.3"/>
<rect x="609" y="302" width="2" height="7.1"/>
<rect x="614" y="302" width="2" height="6.9"/>
<rect x="619" y="302" width="2" height="6.3"/>
<rect x="624" y="302" width="2" height="7.5"/>
<rect x="629" y="302" width="2" height="9.0"/>
<rect x="634" y="302" width="2" height="9.6"/>
<rect x="639" y="302" width="2" height="9.2"/>
<rect x="644" y="302" width="2" height="7.2"/>
<rect x="649" y="302" width="2" height="5.7"/>
<rect x="654" y="302" width="2" height="4.4"/>
<rect x="659" y="302" width="2" height="4.3"/>
<rect x="664" y="302" width="2" height="1.6"/>
<rect x="669" y="301.1" width="2" height="1.4"/>
<rect x="674" y="299.3" width="2" height="3.2"/>
<rect x="679" y="297.8" width="2" height="4.7"/>
<rect x="684" y="296.5" width="2" height="6.0"/>
<rect x="689" y="295.8" width="2" height="6.7"/>
<rect x="694" y="295.5" width="2" height="7.0"/>
<rect x="699" y="295.2" width="2" height="7.3"/>
<rect x="704" y="296.3" width="2" height="6.2"/>
<rect x="709" y="298.9" width="2" height="3.6"/>
<rect x="714" y="299.9" width="2" height="2.6"/>
<rect x="719" y="300.4" width="2" height="2.1"/>
<rect x="724" y="298.1" width="2" height="4.4"/>
<rect x="729" y="295.9" width="2" height="6.6"/>
<rect x="734" y="293.8" width="2" height="8.7"/>
<rect x="739" y="291.8" width="2" height="10.7"/>
<rect x="743" y="290.7" width="2" height="11.8"/>
<rect x="748" y="290.5" width="2" height="12.0"/>
<rect x="753" y="290.3" width="2" height="12.2"/>
<rect x="758" y="291.2" width="2" height="11.3"/>
<rect x="763" y="292.3" width="2" height="10.2"/>
<rect x="768" y="292.8" width="2" height="9.7"/>
<rect x="773" y="293.4" width="2" height="9.1"/>
<rect x="778" y="294.0" width="2" height="8.5"/>
<rect x="783" y="294.6" width="2" height="7.9"/>
<rect x="788" y="296.2" width="2" height="6.3"/>
<rect x="793" y="297.8" width="2" height="4.7"/>
<rect x="798" y="299.2" width="2" height="3.3"/>
<rect x="803" y="300.4" width="2" height="2.1"/>
<rect x="808" y="301.1" width="2" height="1.4"/>
<rect x="813" y="300.8" width="2" height="1.7"/>
<rect x="818" y="300.0" width="2" height="2.5"/>
<rect x="823" y="300.1" width="2" height="2.4"/>
<rect x="828" y="300.1" width="2" height="2.4"/>
<rect x="833" y="299.8" width="2" height="2.7"/>
<rect x="838" y="300.3" width="2" height="2.2"/>
<rect x="843" y="301.1" width="2" height="1.4"/>
<rect x="848" y="301.4" width="2" height="1.1"/>
<rect x="853" y="302" width="2" height="1.7"/>
<rect x="858" y="302" width="2" height="3.3"/>
<rect x="863" y="302" width="2" height="4.7"/>
<rect x="868" y="302" width="2" height="5.1"/>
<rect x="873" y="302" width="2" height="5.5"/>
<rect x="877" y="302" width="2" height="5.6"/>
<rect x="882" y="302" width="2" height="6.0"/>
<rect x="887" y="302" width="2" height="6.4"/>
<rect x="892" y="302" width="2" height="6.4"/>
</g>
<polyline points="18.6,285.8 22.9,290.0 30.5,296.9 34.7,299.0 41.6,301.1 45.8,303.9 55.5,313.3 65.2,318.5 73.6,322.3 79.1,322.3 87.4,317.8 95.9,315.3 113.2,312.7 137.5,314.5 163.6,315.3 172.3,315.3 182.7,313.6 200.0,311.0 210.4,306.7 226.0,304.6 259.0,305.8 269.4,294.5 279.9,285.0 286.8,281.5 293.7,281.5 297.2,282.4 314.6,282.4 321.5,281.0 347.6,282.4 365.0,287.6 373.6,290.2 398.0,290.7 402.2,291.0 416.0,298.0 435.1,301.5 459.4,301.8 494.2,302.3 504.6,299.7 515.0,297.1 525.4,298.0 546.3,300.6 560.1,305.8 570.6,311.9 580.0,316.2 593.9,323.2 604.3,322.3 611.3,325.4 620.0,326.6 632.1,334.4 639.0,336.2 646.0,335.3 659.9,335.3 675.5,324.9 687.6,318.0 701.5,311.5 710.2,314.5 718.9,313.6 727.6,306.7 736.3,298.0 745.0,289.3 753.9,282.4 767.8,276.3 783.4,272.8 792.1,274.0 809.4,275.4 818.1,273.3 833.8,270.2 851.1,272.8 861.5,278.0 875.4,281.5 891.0,286.7" fill="none" stroke="#10105a" stroke-width="1.3" stroke-linejoin="round"/>
<g fill="#e02424">
<circle cx="19.5" cy="283.5" r="1.5"/>
<circle cx="24.5" cy="285.4" r="1.5"/>
<circle cx="29.5" cy="287.2" r="1.5"/>
<circle cx="34.5" cy="289.0" r="1.5"/>
<circle cx="39.5" cy="291.4" r="1.5"/>
<circle cx="44.5" cy="293.9" r="1.5"/>
<circle cx="49.5" cy="296.4" r="1.5"/>
<circle cx="54.5" cy="298.8" r="1.5"/>
<circle cx="59.5" cy="301.3" r="1.5"/>
<circle cx="64.5" cy="303.9" r="1.5"/>
<circle cx="69.5" cy="306.8" r="1.5"/>
<circle cx="74.5" cy="309.9" r="1.5"/>
<circle cx="78.5" cy="312.9" r="1.5"/>
<circle cx="83.5" cy="314.5" r="1.5"/>
<circle cx="88.5" cy="314.2" r="1.5"/>
<circle cx="93.5" cy="314.0" r="1.5"/>
<circle cx="98.5" cy="313.8" r="1.5"/>
<circle cx="103.5" cy="313.5" r="1.5"/>
<circle cx="108.5" cy="313.3" r="1.5"/>
<circle cx="113.5" cy="313.0" r="1.5"/>
<circle cx="118.5" cy="312.8" r="1.5"/>
<circle cx="123.5" cy="312.5" r="1.5"/>
<circle cx="128.5" cy="312.2" r="1.5"/>
<circle cx="133.5" cy="311.9" r="1.5"/>
<circle cx="138.5" cy="312.1" r="1.5"/>
<circle cx="143.5" cy="312.3" r="1.5"/>
<circle cx="148.5" cy="312.5" r="1.5"/>
<circle cx="153.5" cy="312.8" r="1.5"/>
<circle cx="158.5" cy="313.0" r="1.5"/>
<circle cx="163.5" cy="313.2" r="1.5"/>
<circle cx="168.5" cy="313.4" r="1.5"/>
<circle cx="173.5" cy="313.6" r="1.5"/>
<circle cx="178.5" cy="313.3" r="1.5"/>
<circle cx="183.5" cy="313.0" r="1.5"/>
<circle cx="188.5" cy="312.8" r="1.5"/>
<circle cx="193.5" cy="312.4" r="1.5"/>
<circle cx="198.5" cy="312.1" r="1.5"/>
<circle cx="203.5" cy="311.3" r="1.5"/>
<circle cx="208.5" cy="310.3" r="1.5"/>
<circle cx="212.5" cy="309.3" r="1.5"/>
<circle cx="217.5" cy="308.3" r="1.5"/>
<circle cx="222.5" cy="307.6" r="1.5"/>
<circle cx="227.5" cy="306.8" r="1.5"/>
<circle cx="232.5" cy="306.1" r="1.5"/>
<circle cx="237.5" cy="305.8" r="1.5"/>
<circle cx="242.5" cy="305.8" r="1.5"/>
<circle cx="247.5" cy="305.8" r="1.5"/>
<circle cx="252.5" cy="305.8" r="1.5"/>
<circle cx="257.5" cy="305.7" r="1.5"/>
<circle cx="262.5" cy="304.0" r="1.5"/>
<circle cx="267.5" cy="302.4" r="1.5"/>
<circle cx="272.5" cy="300.8" r="1.5"/>
<circle cx="277.5" cy="297.8" r="1.5"/>
<circle cx="282.5" cy="294.7" r="1.5"/>
<circle cx="287.5" cy="291.7" r="1.5"/>
<circle cx="292.5" cy="289.6" r="1.5"/>
<circle cx="297.5" cy="287.6" r="1.5"/>
<circle cx="302.5" cy="286.5" r="1.5"/>
<circle cx="307.5" cy="285.4" r="1.5"/>
<circle cx="312.5" cy="284.3" r="1.5"/>
<circle cx="317.5" cy="283.5" r="1.5"/>
<circle cx="322.5" cy="282.9" r="1.5"/>
<circle cx="327.5" cy="282.2" r="1.5"/>
<circle cx="332.5" cy="282.0" r="1.5"/>
<circle cx="337.5" cy="282.0" r="1.5"/>
<circle cx="342.5" cy="282.0" r="1.5"/>
<circle cx="346.5" cy="282.0" r="1.5"/>
<circle cx="351.5" cy="282.5" r="1.5"/>
<circle cx="356.5" cy="283.2" r="1.5"/>
<circle cx="361.5" cy="283.8" r="1.5"/>
<circle cx="366.5" cy="284.7" r="1.5"/>
<circle cx="371.5" cy="285.5" r="1.5"/>
<circle cx="376.5" cy="286.1" r="1.5"/>
<circle cx="381.5" cy="286.5" r="1.5"/>
<circle cx="386.5" cy="286.9" r="1.5"/>
<circle cx="391.5" cy="287.4" r="1.5"/>
<circle cx="396.5" cy="288.3" r="1.5"/>
<circle cx="401.5" cy="289.2" r="1.5"/>
<circle cx="406.5" cy="290.0" r="1.5"/>
<circle cx="411.5" cy="291.2" r="1.5"/>
<circle cx="416.5" cy="292.4" r="1.5"/>
<circle cx="421.5" cy="293.6" r="1.5"/>
<circle cx="426.5" cy="294.8" r="1.5"/>
<circle cx="431.5" cy="295.6" r="1.5"/>
<circle cx="436.5" cy="296.5" r="1.5"/>
<circle cx="441.5" cy="297.4" r="1.5"/>
<circle cx="446.5" cy="298.1" r="1.5"/>
<circle cx="451.5" cy="298.7" r="1.5"/>
<circle cx="456.5" cy="299.3" r="1.5"/>
<circle cx="461.5" cy="299.8" r="1.5"/>
<circle cx="466.5" cy="300.0" r="1.5"/>
<circle cx="471.5" cy="300.2" r="1.5"/>
<circle cx="475.5" cy="300.4" r="1.5"/>
<circle cx="480.5" cy="300.6" r="1.5"/>
<circle cx="485.5" cy="300.8" r="1.5"/>
<circle cx="490.5" cy="301.0" r="1.5"/>
<circle cx="495.5" cy="301.0" r="1.5"/>
<circle cx="500.5" cy="300.6" r="1.5"/>
<circle cx="505.5" cy="300.2" r="1.5"/>
<circle cx="510.5" cy="299.8" r="1.5"/>
<circle cx="515.5" cy="299.4" r="1.5"/>
<circle cx="520.5" cy="299.0" r="1.5"/>
<circle cx="525.5" cy="298.6" r="1.5"/>
<circle cx="530.5" cy="298.3" r="1.5"/>
<circle cx="535.5" cy="298.3" r="1.5"/>
<circle cx="540.5" cy="298.3" r="1.5"/>
<circle cx="545.5" cy="298.3" r="1.5"/>
<circle cx="550.5" cy="299.1" r="1.5"/>
<circle cx="555.5" cy="300.1" r="1.5"/>
<circle cx="560.5" cy="301.1" r="1.5"/>
<circle cx="565.5" cy="302.5" r="1.5"/>
<circle cx="570.5" cy="303.8" r="1.5"/>
<circle cx="575.5" cy="305.1" r="1.5"/>
<circle cx="580.5" cy="306.4" r="1.5"/>
<circle cx="585.5" cy="308.5" r="1.5"/>
<circle cx="590.5" cy="310.7" r="1.5"/>
<circle cx="595.5" cy="312.8" r="1.5"/>
<circle cx="600.5" cy="314.9" r="1.5"/>
<circle cx="605.5" cy="316.4" r="1.5"/>
<circle cx="609.5" cy="317.7" r="1.5"/>
<circle cx="614.5" cy="319.1" r="1.5"/>
<circle cx="619.5" cy="320.5" r="1.5"/>
<circle cx="624.5" cy="322.1" r="1.5"/>
<circle cx="629.5" cy="323.7" r="1.5"/>
<circle cx="634.5" cy="325.4" r="1.5"/>
<circle cx="639.5" cy="327.0" r="1.5"/>
<circle cx="644.5" cy="328.5" r="1.5"/>
<circle cx="649.5" cy="329.8" r="1.5"/>
<circle cx="654.5" cy="331.2" r="1.5"/>
<circle cx="659.5" cy="331.3" r="1.5"/>
<circle cx="664.5" cy="331.3" r="1.5"/>
<circle cx="669.5" cy="330.1" r="1.5"/>
<circle cx="674.5" cy="328.7" r="1.5"/>
<circle cx="679.5" cy="327.3" r="1.5"/>
<circle cx="684.5" cy="325.8" r="1.5"/>
<circle cx="689.5" cy="323.9" r="1.5"/>
<circle cx="694.5" cy="321.9" r="1.5"/>
<circle cx="699.5" cy="319.9" r="1.5"/>
<circle cx="704.5" cy="318.3" r="1.5"/>
<circle cx="709.5" cy="317.3" r="1.5"/>
<circle cx="714.5" cy="316.3" r="1.5"/>
<circle cx="719.5" cy="315.3" r="1.5"/>
<circle cx="724.5" cy="313.9" r="1.5"/>
<circle cx="729.5" cy="312.1" r="1.5"/>
<circle cx="734.5" cy="309.3" r="1.5"/>
<circle cx="739.5" cy="306.4" r="1.5"/>
<circle cx="743.5" cy="302.7" r="1.5"/>
<circle cx="748.5" cy="298.7" r="1.5"/>
<circle cx="753.5" cy="295.1" r="1.5"/>
<circle cx="758.5" cy="291.8" r="1.5"/>
<circle cx="763.5" cy="288.5" r="1.5"/>
<circle cx="768.5" cy="285.9" r="1.5"/>
<circle cx="773.5" cy="284.1" r="1.5"/>
<circle cx="778.5" cy="282.4" r="1.5"/>
<circle cx="783.5" cy="280.7" r="1.5"/>
<circle cx="788.5" cy="279.6" r="1.5"/>
<circle cx="793.5" cy="278.5" r="1.5"/>
<circle cx="798.5" cy="277.4" r="1.5"/>
<circle cx="803.5" cy="276.6" r="1.5"/>
<circle cx="808.5" cy="276.2" r="1.5"/>
<circle cx="813.5" cy="275.8" r="1.5"/>
<circle cx="818.5" cy="275.4" r="1.5"/>
<circle cx="823.5" cy="274.4" r="1.5"/>
<circle cx="828.5" cy="273.3" r="1.5"/>
<circle cx="833.5" cy="272.7" r="1.5"/>
<circle cx="838.5" cy="272.6" r="1.5"/>
<circle cx="843.5" cy="272.5" r="1.5"/>
<circle cx="848.5" cy="272.4" r="1.5"/>
<circle cx="853.5" cy="272.3" r="1.5"/>
<circle cx="858.5" cy="273.1" r="1.5"/>
<circle cx="863.5" cy="273.9" r="1.5"/>
<circle cx="868.5" cy="274.7" r="1.5"/>
<circle cx="873.5" cy="275.5" r="1.5"/>
<circle cx="877.5" cy="276.8" r="1.5"/>
<circle cx="882.5" cy="278.0" r="1.5"/>
<circle cx="887.5" cy="279.2" r="1.5"/>
<circle cx="892.5" cy="280.5" r="1.5"/>
</g></g>
<rect x="19" y="268" width="30" height="12" fill="#3c4149"/>
<text x="20" y="278.5" font-size="10.5" fill="#1c1c78" textLength="28" lengthAdjust="spacingAndGlyphs">MACD</text>
<rect x="19" y="354" width="873" height="2" fill="#17179e"/>
<rect x="19" y="396" width="873" height="2" fill="#17179e"/>
<g clip-path="url(#crsi)">
<polygon points="18.6,363.8 20.3,367.3 22.9,381.2 30.0,384.0 36.8,381.2 39.4,379.5 43.8,381.2 55.0,386.0 65.0,384.0 79.4,384.7 83.7,379.1 94.1,379.1 97.6,380.3 104.5,377.4 113.2,383.8 121.9,381.2 130.6,386.4 137.5,388.5 143.6,383.8 149.7,387.3 154.9,384.7 160.1,384.7 168.8,390.2 174.0,382.0 186.1,380.8 189.6,380.3 196.6,383.3 203.5,373.4 212.2,370.8 219.1,374.3 226.0,374.3 231.3,376.9 241.7,387.8 248.6,380.3 257.3,376.9 259.9,367.3 263.4,355.5 268.0,350.0 276.4,346.8 283.0,349.0 288.5,355.2 292.0,364.7 297.2,362.1 304.2,362.1 311.1,359.5 318.1,362.1 322.4,356.5 331.9,362.4 340.6,360.4 352.8,364.7 359.7,363.8 366.7,370.4 371.9,370.4 378.8,363.8 385.8,365.6 391.0,361.2 400.4,366.4 406.5,371.6 410.8,384.7 421.3,378.6 428.2,379.5 431.7,377.4 436.9,380.3 442.1,372.5 452.5,373.4 461.2,378.1 466.4,373.9 473.3,376.3 480.3,374.3 485.5,376.3 492.4,376.0 495.9,373.4 501.1,364.7 509.8,360.4 515.0,363.0 521.9,373.4 527.2,375.1 534.1,372.5 541.0,375.1 546.3,380.3 549.7,378.6 556.7,392.5 560.1,390.6 564.7,390.6 569.9,400.0 573.5,401.0 578.8,402.6 586.0,405.2 590.0,407.0 596.0,405.2 600.1,394.3 610.0,398.0 620.0,400.8 628.0,404.5 634.0,401.8 639.0,402.6 646.0,399.0 655.0,396.0 662.0,392.2 668.3,382.3 673.5,378.6 680.7,378.6 685.9,376.0 692.8,378.6 699.8,374.3 704.1,373.4 708.5,393.3 713.7,378.6 718.9,375.1 729.3,363.5 734.5,363.0 739.7,360.7 746.9,358.6 755.6,357.8 759.1,356.0 767.8,355.5 774.7,355.5 782.5,353.1 788.6,359.5 795.6,358.3 802.5,356.5 809.4,354.8 814.7,350.8 823.3,350.3 828.5,346.5 837.2,355.5 847.6,355.2 858.1,362.1 868.5,363.0 873.7,365.2 878.0,362.4 883.2,365.6 891.0,363.5 891.0,397.0 18.6,397.0" fill="url(#rf)" clip-path="url(#rmid)"/>
</g>
<g stroke="#6c757f" stroke-width="1" stroke-dasharray="3 3" shape-rendering="crispEdges" opacity="0.8">
<path d="M34.5 345 V405"/>
<path d="M64.5 345 V405"/>
<path d="M93.5 345 V405"/>
<path d="M123.5 345 V405"/>
<path d="M153.5 345 V405"/>
<path d="M183.5 345 V405"/>
<path d="M212.5 345 V405"/>
<path d="M242.5 345 V405"/>
<path d="M272.5 345 V405"/>
<path d="M302.5 345 V405"/>
<path d="M332.5 345 V405"/>
<path d="M361.5 345 V405"/>
<path d="M391.5 345 V405"/>
<path d="M421.5 345 V405"/>
<path d="M451.5 345 V405"/>
<path d="M480.5 345 V405"/>
<path d="M505.5 345 V405"/>
<path d="M520.5 345 V405"/>
<path d="M550.5 345 V405"/>
<path d="M580.5 345 V405"/>
<path d="M619.5 345 V405"/>
<path d="M649.5 345 V405"/>
<path d="M679.5 345 V405"/>
<path d="M709.5 345 V405"/>
<path d="M739.5 345 V405"/>
<path d="M768.5 345 V405"/>
<path d="M798.5 345 V405"/>
<path d="M828.5 345 V405"/>
<path d="M858.5 345 V405"/>
<path d="M887.5 345 V405"/>
<path d="M18 375.5 H902"/>
</g>
<g clip-path="url(#crsi)" fill="none" stroke-width="1.1" stroke-linejoin="round">
<polyline points="18.6,363.8 20.3,367.3 22.9,381.2 30.0,384.0 36.8,381.2 39.4,379.5 43.8,381.2 55.0,386.0 65.0,384.0 79.4,384.7 83.7,379.1 94.1,379.1 97.6,380.3 104.5,377.4 113.2,383.8 121.9,381.2 130.6,386.4 137.5,388.5 143.6,383.8 149.7,387.3 154.9,384.7 160.1,384.7 168.8,390.2 174.0,382.0 186.1,380.8 189.6,380.3 196.6,383.3 203.5,373.4 212.2,370.8 219.1,374.3 226.0,374.3 231.3,376.9 241.7,387.8 248.6,380.3 257.3,376.9 259.9,367.3 263.4,355.5" stroke="#f0922e"/>
<polyline points="263.4,355.5 268.0,350.0 276.4,346.8 283.0,349.0 288.5,355.2" stroke="#b836c8"/>
<polyline points="288.5,355.2 292.0,364.7 297.2,362.1 304.2,362.1 311.1,359.5 318.1,362.1 322.4,356.5 331.9,362.4 340.6,360.4 352.8,364.7 359.7,363.8 366.7,370.4 371.9,370.4 378.8,363.8 385.8,365.6 391.0,361.2 400.4,366.4 406.5,371.6 410.8,384.7 421.3,378.6 428.2,379.5 431.7,377.4 436.9,380.3 442.1,372.5 452.5,373.4 461.2,378.1 466.4,373.9 473.3,376.3 480.3,374.3 485.5,376.3 492.4,376.0 495.9,373.4 501.1,364.7 509.8,360.4 515.0,363.0 521.9,373.4 527.2,375.1 534.1,372.5 541.0,375.1 546.3,380.3 549.7,378.6 556.7,392.5 560.1,390.6 564.7,390.6" stroke="#f0922e"/>
<polyline points="564.7,390.6 569.9,400.0 573.5,401.0 578.8,402.6 586.0,405.2 590.0,407.0 596.0,405.2" stroke="#34d034"/>
<polyline points="596.0,405.2 600.1,394.3" stroke="#f0922e"/>
<polyline points="600.1,394.3 610.0,398.0 620.0,400.8 628.0,404.5 634.0,401.8 639.0,402.6 646.0,399.0" stroke="#34d034"/>
<polyline points="646.0,399.0 655.0,396.0 662.0,392.2 668.3,382.3 673.5,378.6 680.7,378.6 685.9,376.0 692.8,378.6 699.8,374.3 704.1,373.4 708.5,393.3 713.7,378.6 718.9,375.1 729.3,363.5 734.5,363.0 739.7,360.7 746.9,358.6 755.6,357.8 759.1,356.0 767.8,355.5 774.7,355.5" stroke="#f0922e"/>
<polyline points="774.7,355.5 782.5,353.1" stroke="#b836c8"/>
<polyline points="782.5,353.1 788.6,359.5 795.6,358.3 802.5,356.5" stroke="#f0922e"/>
<polyline points="802.5,356.5 809.4,354.8 814.7,350.8 823.3,350.3 828.5,346.5" stroke="#b836c8"/>
<polyline points="828.5,346.5 837.2,355.5" stroke="#f0922e"/>
<polyline points="837.2,355.5 847.6,355.2" stroke="#b836c8"/>
<polyline points="847.6,355.2 858.1,362.1 868.5,363.0 873.7,365.2 878.0,362.4 883.2,365.6 891.0,363.5" stroke="#f0922e"/>
</g>
<rect x="19" y="346" width="17" height="13" fill="#3c4149"/>
<text x="20" y="357.3" font-size="11" fill="#e88a3a" textLength="15.5" lengthAdjust="spacingAndGlyphs">RSI</text>
<rect x="18" y="40" width="885" height="1" fill="#343a42"/>
<g fill="none" stroke="#a9bccb" stroke-width="1" shape-rendering="crispEdges">
<rect x="18.5" y="41.5" width="884" height="220"/>
<rect x="18.5" y="267.5" width="884" height="72"/>
<rect x="18.5" y="345.5" width="884" height="60"/>
</g>
<rect x="18" y="41" width="31" height="22" fill="#f0f0f0"/>
<rect x="18" y="41" width="31" height="5" fill="#d2d2d2"/>
<rect x="22.5" y="49.5" width="9" height="9" rx="1.5" fill="url(#lr)" stroke="#a01a20"/>
<rect x="35.5" y="49.5" width="9" height="9" rx="1.5" fill="url(#lb)" stroke="#1a6aa0"/>
<g stroke="#a9bccb" stroke-width="1" shape-rendering="crispEdges">
<path d="M903 43.5 H906"/>
<path d="M903 75.5 H906"/>
<path d="M903 107.5 H906"/>
<path d="M903 139.5 H906"/>
<path d="M903 171.5 H906"/>
<path d="M903 203.5 H906"/>
<path d="M903 235.5 H906"/>
<path d="M903 302.5 H906"/>
<path d="M903 375.5 H906"/>
<path d="M34.5 406 V409"/>
<path d="M64.5 406 V409"/>
<path d="M93.5 406 V409"/>
<path d="M123.5 406 V409"/>
<path d="M153.5 406 V409"/>
<path d="M183.5 406 V409"/>
<path d="M212.5 406 V409"/>
<path d="M242.5 406 V409"/>
<path d="M272.5 406 V409"/>
<path d="M302.5 406 V409"/>
<path d="M332.5 406 V409"/>
<path d="M361.5 406 V409"/>
<path d="M391.5 406 V409"/>
<path d="M421.5 406 V409"/>
<path d="M451.5 406 V409"/>
<path d="M480.5 406 V409"/>
<path d="M505.5 406 V409"/>
<path d="M520.5 406 V409"/>
<path d="M550.5 406 V409"/>
<path d="M580.5 406 V409"/>
<path d="M600.5 406 V409"/>
<path d="M619.5 406 V409"/>
<path d="M649.5 406 V409"/>
<path d="M679.5 406 V409"/>
<path d="M709.5 406 V409"/>
<path d="M739.5 406 V409"/>
<path d="M768.5 406 V409"/>
<path d="M798.5 406 V409"/>
<path d="M828.5 406 V409"/>
<path d="M858.5 406 V409"/>
<path d="M887.5 406 V409"/>
</g>
<text x="909.6" y="50.5" font-size="11" fill="#f3f0e8" stroke="#f3f0e8" stroke-width="0.25" textLength="33" lengthAdjust="spacingAndGlyphs">111.00</text>
<text x="909.6" y="82.5" font-size="11" fill="#f3f0e8" stroke="#f3f0e8" stroke-width="0.25" textLength="33" lengthAdjust="spacingAndGlyphs">110.50</text>
<text x="909.6" y="146.5" font-size="11" fill="#f3f0e8" stroke="#f3f0e8" stroke-width="0.25" textLength="33" lengthAdjust="spacingAndGlyphs">109.50</text>
<text x="909.6" y="178.5" font-size="11" fill="#f3f0e8" stroke="#f3f0e8" stroke-width="0.25" textLength="33" lengthAdjust="spacingAndGlyphs">109.00</text>
<text x="909.6" y="210.5" font-size="11" fill="#f3f0e8" stroke="#f3f0e8" stroke-width="0.25" textLength="33" lengthAdjust="spacingAndGlyphs">108.50</text>
<text x="909.6" y="242.5" font-size="11" fill="#f3f0e8" stroke="#f3f0e8" stroke-width="0.25" textLength="33" lengthAdjust="spacingAndGlyphs">108.00</text>
<text x="910.8" y="309.2" font-size="11" fill="#f3f0e8" stroke="#f3f0e8" stroke-width="0.25">+0.0</text>
<text x="909.6" y="382.5" font-size="11" fill="#f3f0e8" stroke="#f3f0e8" stroke-width="0.25">50</text>
<rect x="902" y="102" width="48" height="21" fill="#ffffff"/>
<text x="911" y="116.3" font-size="11" fill="#3a4250" textLength="32" lengthAdjust="spacingAndGlyphs">109.92</text>
<text x="33.7" y="428" font-size="11" fill="#f3f0e8" stroke="#f3f0e8" stroke-width="0.35" text-anchor="middle">3</text>
<text x="63.7" y="428" font-size="11" fill="#f3f0e8" stroke="#f3f0e8" stroke-width="0.35" text-anchor="middle">4</text>
<text x="92.7" y="428" font-size="11" fill="#f3f0e8" stroke="#f3f0e8" stroke-width="0.35" text-anchor="middle">5</text>
<text x="122.7" y="428" font-size="11" fill="#f3f0e8" stroke="#f3f0e8" stroke-width="0.35" text-anchor="middle">6</text>
<text x="152.7" y="428" font-size="11" fill="#f3f0e8" stroke="#f3f0e8" stroke-width="0.35" text-anchor="middle">9</text>
<text x="182.7" y="428" font-size="11" fill="#f3f0e8" stroke="#f3f0e8" stroke-width="0.35" text-anchor="middle">10</text>
<text x="211.7" y="428" font-size="11" fill="#f3f0e8" stroke="#f3f0e8" stroke-width="0.35" text-anchor="middle">11</text>
<text x="241.7" y="428" font-size="11" fill="#f3f0e8" stroke="#f3f0e8" stroke-width="0.35" text-anchor="middle">12</text>
<text x="271.7" y="428" font-size="11" fill="#f3f0e8" stroke="#f3f0e8" stroke-width="0.35" text-anchor="middle">13</text>
<text x="301.7" y="428" font-size="11" fill="#f3f0e8" stroke="#f3f0e8" stroke-width="0.35" text-anchor="middle">16</text>
<text x="331.7" y="428" font-size="11" fill="#f3f0e8" stroke="#f3f0e8" stroke-width="0.35" text-anchor="middle">17</text>
<text x="360.7" y="428" font-size="11" fill="#f3f0e8" stroke="#f3f0e8" stroke-width="0.35" text-anchor="middle">18</text>
<text x="390.7" y="428" font-size="11" fill="#f3f0e8" stroke="#f3f0e8" stroke-width="0.35" text-anchor="middle">19</text>
<text x="420.7" y="428" font-size="11" fill="#f3f0e8" stroke="#f3f0e8" stroke-width="0.35" text-anchor="middle">20</text>
<text x="450.7" y="428" font-size="11" fill="#f3f0e8" stroke="#f3f0e8" stroke-width="0.35" text-anchor="middle">23</text>
<text x="479.7" y="428" font-size="11" fill="#f3f0e8" stroke="#f3f0e8" stroke-width="0.35" text-anchor="middle">24</text>
<text x="504.7" y="428" font-size="11" fill="#f3f0e8" stroke="#f3f0e8" stroke-width="0.35" text-anchor="middle">26</text>
<text x="519.7" y="428" font-size="11" fill="#f3f0e8" stroke="#f3f0e8" stroke-width="0.35" text-anchor="middle">27</text>
<text x="549.7" y="428" font-size="11" fill="#f3f0e8" stroke="#f3f0e8" stroke-width="0.35" text-anchor="middle">30</text>
<text x="579.7" y="428" font-size="11" fill="#f3f0e8" stroke="#f3f0e8" stroke-width="0.35" text-anchor="middle">31</text>
<text x="599.7" y="428" font-size="11" fill="#f3f0e8" stroke="#f3f0e8" stroke-width="0.35" text-anchor="middle">2</text>
<text x="618.7" y="428" font-size="11" fill="#f3f0e8" stroke="#f3f0e8" stroke-width="0.35" text-anchor="middle">3</text>
<text x="648.7" y="428" font-size="11" fill="#f3f0e8" stroke="#f3f0e8" stroke-width="0.35" text-anchor="middle">6</text>
<text x="678.7" y="428" font-size="11" fill="#f3f0e8" stroke="#f3f0e8" stroke-width="0.35" text-anchor="middle">7</text>
<text x="708.7" y="428" font-size="11" fill="#f3f0e8" stroke="#f3f0e8" stroke-width="0.35" text-anchor="middle">8</text>
<text x="738.7" y="428" font-size="11" fill="#f3f0e8" stroke="#f3f0e8" stroke-width="0.35" text-anchor="middle">9</text>
<text x="767.7" y="428" font-size="11" fill="#f3f0e8" stroke="#f3f0e8" stroke-width="0.35" text-anchor="middle">10</text>
<text x="797.7" y="428" font-size="11" fill="#f3f0e8" stroke="#f3f0e8" stroke-width="0.35" text-anchor="middle">13</text>
<text x="827.7" y="428" font-size="11" fill="#f3f0e8" stroke="#f3f0e8" stroke-width="0.35" text-anchor="middle">14</text>
<text x="857.7" y="428" font-size="11" fill="#f3f0e8" stroke="#f3f0e8" stroke-width="0.35" text-anchor="middle">15</text>
<text x="886.7" y="428" font-size="11" fill="#f3f0e8" stroke="#f3f0e8" stroke-width="0.35" text-anchor="middle">16</text>
<path d="M18.5 382.5 H77 L79.5 385 V399 L77 401.5 H18.5 Z" fill="#5b6a82" stroke="#aec4d2" stroke-width="1"/>
<rect x="18" y="382" width="2" height="27" fill="#c6eee8"/>
<text x="26" y="396" font-size="11" fill="#f4f6f8" textLength="46" lengthAdjust="spacingAndGlyphs">Дек 2019</text>
<path d="M600.5 382.5 H659 L661.5 385 V399 L659 401.5 H600.5 Z" fill="#5b6a82" stroke="#aec4d2" stroke-width="1"/>
<rect x="600" y="382" width="2" height="27" fill="#c6eee8"/>
<text x="608.5" y="396" font-size="11" fill="#f4f6f8" textLength="46" lengthAdjust="spacingAndGlyphs">Янв 2020</text>
</svg></body></html>
